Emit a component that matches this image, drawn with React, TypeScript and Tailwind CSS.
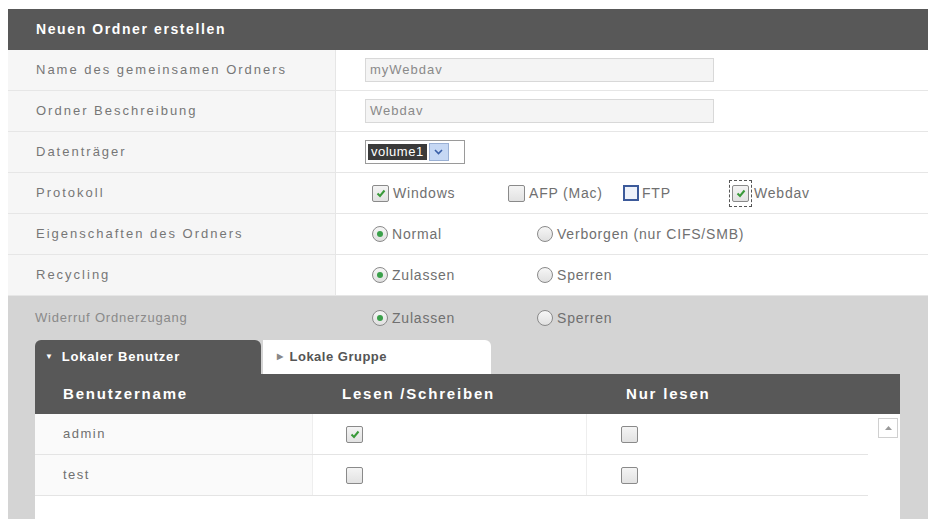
import React from 'react';

const font = { fontFamily: '"Liberation Sans", Arial, sans-serif' };

const Check: React.FC<{ checked?: boolean }> = ({ checked }) => (
  <span className="inline-flex items-center justify-center w-[17px] h-[17px] border border-[#8a8a8a] bg-gradient-to-b from-[#f4f4f4] to-[#e2e2e2] rounded-[2px] shrink-0">
    {checked && (
      <svg width="10" height="9" viewBox="0 0 10 9">
        <path d="M1.5 4.5 L4 7 L8.5 1.5" stroke="#3a9a3a" strokeWidth="2" fill="none" />
      </svg>
    )}
  </span>
);

const Radio: React.FC<{ checked?: boolean }> = ({ checked }) => (
  <span className="inline-flex items-center justify-center w-[16px] h-[16px] rounded-full border border-[#8a8a8a] bg-gradient-to-b from-[#f6f6f6] to-[#e0e0e0] shrink-0">
    {checked && <span className="w-[6px] h-[6px] rounded-full bg-[#3aa04a]" />}
  </span>
);

const Row: React.FC<{ label: string; inset?: boolean; children: React.ReactNode }> = ({ label, inset, children }) => (
  <div className="flex h-[41px] border-b border-[#e6e6e6]">
    <div className="w-[328px] bg-[#f6f6f6] border-r border-[#e6e6e6] flex items-center pl-[28px] text-[13px] text-[#767676] tracking-[2px]">
      {label}
    </div>
    <div
      className={
        inset
          ? 'flex-1 flex items-center pl-[36px] text-[14px] text-[#707070] tracking-[0.8px]'
          : 'flex-1 flex items-center pl-[29px] text-[13px] text-[#707070] tracking-[1px]'
      }
    >
      {children}
    </div>
  </div>
);

const App: React.FC = () => {
  return (
    <div className="w-[937px] h-[523px] bg-white overflow-hidden" style={font}>
      <div className="ml-[8px] mt-[9px] w-[920px]">
        <div className="h-[41px] bg-[#585858] flex items-center pl-[28px] text-white font-bold text-[14px] tracking-[1.6px]">
          Neuen Ordner erstellen
        </div>

        <Row label="Name des gemeinsamen Ordners">
          <div className="w-[349px] h-[24px] bg-[#f4f4f4] border border-[#d8d8d8] flex items-center pl-[4px] text-[#8a8a8a]">
            myWebdav
          </div>
        </Row>
        <Row label="Ordner Beschreibung">
          <div className="w-[349px] h-[24px] bg-[#f4f4f4] border border-[#d8d8d8] flex items-center pl-[4px] text-[#8a8a8a]">
            Webdav
          </div>
        </Row>
        <Row label="Datenträger">
          <div className="h-[24px] w-[100px] border border-[#9a9a9a] bg-white flex items-center px-[2px] gap-[2px]">
            <span className="bg-[#3a3a3a] text-white px-[3px] leading-[16px] text-[13px] tracking-[0.5px]">volume1</span>
            <span className="w-[20px] h-[18px] bg-[#c6d8f4] border border-[#9ab0d4] flex items-center justify-center">
              <svg width="9" height="6" viewBox="0 0 9 6">
                <path d="M1 1 L4.5 4.5 L8 1" stroke="#3a5fa8" strokeWidth="1.6" fill="none" />
              </svg>
            </span>
          </div>
        </Row>
        <Row label="Protokoll" inset>
          <div className="flex items-center">
            <span className="flex items-center gap-[4px] w-[136px]"><Check checked />Windows</span>
            <span className="flex items-center gap-[4px] w-[115px]"><Check />AFP (Mac)</span>
            <span className="flex items-center gap-[3px] w-[106px]">
              <span className="inline-flex w-[16px] h-[16px] border-2 border-[#3c5a9a] bg-[#eef2fa]" />
              FTP
            </span>
            <span className="flex items-center gap-[2px]">
              <span className="border border-dashed border-[#555] p-[2px]"><Check checked /></span>
              Webdav
            </span>
          </div>
        </Row>
        <Row label="Eigenschaften des Ordners" inset>
          <span className="flex items-center gap-[4px] w-[165px]"><Radio checked />Normal</span>
          <span className="flex items-center gap-[4px]"><Radio />Verborgen (nur CIFS/SMB)</span>
        </Row>
        <Row label="Recycling" inset>
          <span className="flex items-center gap-[4px] w-[165px]"><Radio checked />Zulassen</span>
          <span className="flex items-center gap-[4px]"><Radio />Sperren</span>
        </Row>

        <div className="bg-[#d4d4d4] h-[223px] pl-[27px] pr-[28px]">
          <div className="flex h-[44px] items-center">
            <div className="w-[301px] text-[13px] text-[#8a8a8a] tracking-[0.8px]">Widerruf Ordnerzugang</div>
            <div className="flex items-center text-[14px] text-[#707070] tracking-[0.8px] pl-[36px]">
              <span className="flex items-center gap-[4px] w-[165px]"><Radio checked />Zulassen</span>
              <span className="flex items-center gap-[4px]"><Radio />Sperren</span>
            </div>
          </div>
          <div className="flex">
            <div className="w-[226px] h-[34px] bg-[#585858] rounded-t-[6px] flex items-center pl-[10px] gap-[8px] text-white text-[13px] font-bold tracking-[0.8px]">
              <span className="text-[8px]">▼</span>Lokaler Benutzer
            </div>
            <div className="ml-[2px] w-[228px] h-[34px] bg-white rounded-tr-[6px] flex items-center pl-[14px] gap-[6px] text-[#555] text-[13px] font-bold tracking-[0.5px]">
              <span className="text-[8px] text-[#888]">▶</span>Lokale Gruppe
            </div>
          </div>
          <div className="h-[40px] bg-[#585858] flex items-center text-white font-bold text-[15px] tracking-[1.8px]">
            <div className="w-[278px] pl-[28px]">Benutzername</div>
            <div className="w-[274px] pl-[29px]">Lesen /Schreiben</div>
            <div className="pl-[39px]">Nur lesen</div>
          </div>
          <div className="bg-white h-[109px] flex">
            <div className="w-[833px]">
              {[
                { name: 'admin', rw: true },
                { name: 'test', rw: false },
              ].map((u) => (
                <div key={u.name} className="flex h-[41px] border-b border-[#e4e4e4]">
                  <div className="w-[278px] bg-[#fafafa] border-r border-[#eeeeee] flex items-center pl-[28px] text-[13px] text-[#707070] tracking-[1.5px]">
                    {u.name}
                  </div>
                  <div className="w-[274px] border-r border-[#eeeeee] flex items-center pl-[33px]">
                    <Check checked={u.rw} />
                  </div>
                  <div className="flex-1 flex items-center pl-[34px]">
                    <Check />
                  </div>
                </div>
              ))}
            </div>
            <div className="flex-1 flex justify-end pt-[4px] pr-[2px]">
              <div className="w-[20px] h-[20px] border border-[#d0d0d0] bg-white flex items-center justify-center">
                <svg width="7" height="4" viewBox="0 0 7 4">
                  <path d="M0 4 L3.5 0 L7 4 Z" fill="#999" />
                </svg>
              </div>
            </div>
          </div>
        </div>
      </div>
    </div>
  );
};

export default App;
